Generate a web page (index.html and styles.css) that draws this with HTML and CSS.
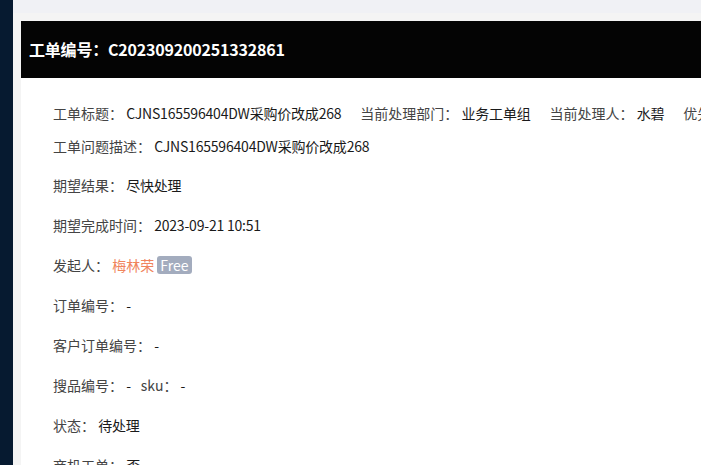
FILE: index.html
```html
<!DOCTYPE html>
<html lang="zh-CN">
<head>
<meta charset="utf-8">
<title>工单详情</title>
<link rel="stylesheet" href="styles.css">
</head>
<body>
<div class="layout">
  <aside class="sidebar"></aside>
  <main class="main">
    <div class="topbar"></div>
    <div class="content">
      <section class="card">
        <header class="card-head">工单编号：C202309200251332861</header>
        <div class="card-body">
          <div class="row row-first">
            <span class="item"><span class="label">工单标题：</span> <span class="value">CJNS165596404DW采购价改成268</span></span>
            <span class="item"><span class="label">当前处理部门：</span> <span class="value">业务工单组</span></span>
            <span class="item"><span class="label">当前处理人：</span> <span class="value">水碧</span></span>
            <span class="item"><span class="label">优先级：</span> <span class="value">普通</span></span>
          </div>
          <div class="row row-second"><span class="label">工单问题描述：</span> <span class="value">CJNS165596404DW采购价改成268</span></div>
          <div class="row"><span class="label">期望结果：</span> <span class="value">尽快处理</span></div>
          <div class="row"><span class="label">期望完成时间：</span> <span class="value">2023-09-21 10:51</span></div>
          <div class="row"><span class="label">发起人：</span> <span class="name">梅林荣</span> <span class="badge">Free</span></div>
          <div class="row"><span class="label">订单编号：</span> <span class="value">-</span></div>
          <div class="row"><span class="label">客户订单编号：</span> <span class="value">-</span></div>
          <div class="row"><span class="label">搜品编号：</span> <span class="value">-</span><span class="label sub-label">sku：</span> <span class="value">-</span></div>
          <div class="row"><span class="label">状态：</span> <span class="value">待处理</span></div>
          <div class="row"><span class="label">商机工单：</span> <span class="value">否</span></div>
        </div>
      </section>
    </div>
  </main>
</div>
</body>
</html>
```

FILE: styles.css
```css
html, body {
  margin: 0;
  padding: 0;
  height: 100%;
  overflow: hidden;
}
body {
  font-family: "Noto Sans CJK SC", "Noto Sans", sans-serif;
  font-size: 14px;
  color: #1a1a1a;
}
.layout {
  display: flex;
  height: 100vh;
}
.sidebar {
  flex: 0 0 13px;
  background: #061a30;
}
.main {
  flex: 1;
  display: flex;
  flex-direction: column;
  min-width: 0;
  overflow: hidden;
}
.topbar {
  flex: 0 0 13px;
  background: #f0f1f5;
}
.content {
  flex: 1;
  background: #f4f4f4;
  padding: 8px 0 0 8px;
  overflow: hidden;
}
.card {
  width: 900px;
  background: #fff;
}
.card-head {
  background: #040404;
  color: #fff;
  font-size: 16px;
  font-weight: 700;
  line-height: 25px;
  padding: 16px 8px;
  letter-spacing: -0.2px;
}
.card-body {
  padding: 24px 32px 0;
}
.row {
  line-height: 22px;
  margin-bottom: 18px;
  white-space: nowrap;
}
.row-first {
  margin-bottom: 11px;
  display: flex;
  gap: 19px;
}
.row-second {
  margin-bottom: 17px;
}
.label {
  color: #444;
}
.value {
  color: #1a1a1a;
  letter-spacing: -0.2px;
}
.sub-label {
  margin-left: 10px;
}
.name {
  color: #f0845c;
}
.badge {
  display: inline-block;
  background: #a3acbe;
  color: #fff;
  border-radius: 3px;
  padding: 0 3px;
  line-height: 18px;
}
```
